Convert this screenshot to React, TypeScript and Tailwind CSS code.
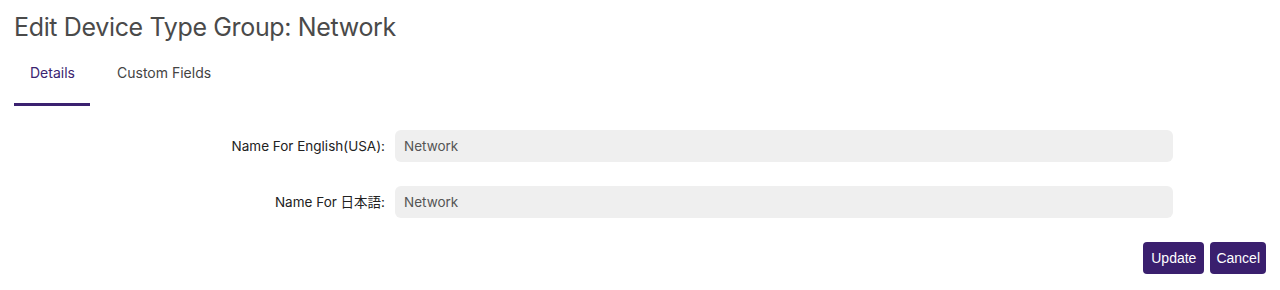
export default function App() {
  const fields = [
    { label: 'Name For English(USA):', value: 'Network' },
    { label: 'Name For 日本語:', value: 'Network' },
  ]

  return (
    <div className="min-h-[290px] bg-white font-['Inter','Noto_Sans_CJK_JP',sans-serif] text-[#333]">
      <h1 className="px-[14px] pt-[11px] text-[25px] leading-[32px] tracking-[-0.35px] text-[#4a4a4a]">
        Edit Device Type Group: Network
      </h1>
      <nav className="mt-[16px] flex px-[14px] text-[14px]">
        <div className="flex w-[76px] flex-col items-center">
          <span className="pl-[1px] leading-[28px] text-[#3b2470]">Details</span>
          <span className="mt-[16px] h-[3px] w-full bg-[#3b2170]" />
        </div>
        <span className="ml-[27px] leading-[28px] text-[#444]">Custom Fields</span>
      </nav>
      <form className="mt-[24px] flex flex-col gap-[24px] pr-[107px]">
        {fields.map((f) => (
          <div key={f.label} className="flex items-center">
            <label className="w-[385px] shrink-0 text-right text-[13.5px] text-[#222]">{f.label}</label>
            <div className="ml-[10px] flex h-[32px] flex-1 items-center rounded-[6px] bg-[#efefef] px-[9px] text-[13.5px] text-[#555]">
              {f.value}
            </div>
          </div>
        ))}
      </form>
      <div className="mt-[24px] flex justify-end gap-[6px] pr-[14px] font-['Liberation_Sans',sans-serif] text-[14px] text-white">
        <button className="h-[32px] rounded-[4px] bg-[#3a1f6e] px-[8px]">Update</button>
        <button className="h-[32px] rounded-[4px] bg-[#3a1f6e] px-[6px]">Cancel</button>
      </div>
    </div>
  )
}
